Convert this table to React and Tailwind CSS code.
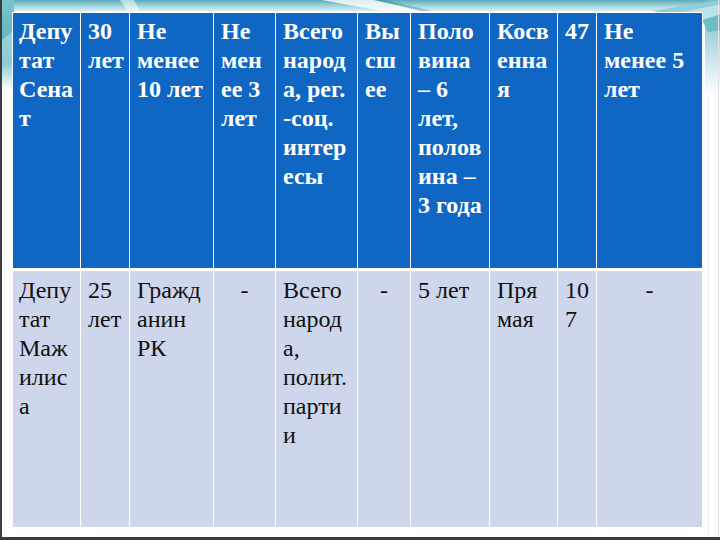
import React from 'react';

const widths = 'grid-cols-[67px_48px_83px_61px_81px_52px_78px_67px_38px_105px]';

// Senate row (blue header)
const senate = [
  ['Депу', 'тат', 'Сена', 'т'],
  ['30', 'лет'],
  ['Не', 'менее', '10 лет'],
  ['Не', 'мен', 'ее 3', 'лет'],
  ['Всего', 'народ', 'а, рег.', '-соц.', 'интер', 'есы'],
  ['Вы', 'сш', 'ее'],
  ['Поло', 'вина', '– 6', 'лет,', 'полов', 'ина –', '3 года'],
  ['Косв', 'енна', 'я'],
  ['47'],
  ['Не', 'менее 5', 'лет'],
];

// Majilis row (light row)
const majilis = [
  { lines: ['Депу', 'тат', 'Маж', 'илис', 'а'] },
  { lines: ['25', 'лет'] },
  { lines: ['Гражд', 'анин', 'РК'] },
  { lines: ['-'], center: true },
  { lines: ['Всего', 'народ', 'а,', 'полит.', 'парти', 'и'] },
  { lines: ['-'], center: true },
  { lines: ['5 лет'] },
  { lines: ['Пря', 'мая'] },
  { lines: ['10', '7'] },
  { lines: ['-'], center: true },
];

function Lines({ lines }) {
  return lines.map((l, i) => (
    <div key={i} className="whitespace-nowrap">{l}</div>
  ));
}

function Decor() {
  return (
    <svg className="absolute inset-0" width="720" height="540" viewBox="0 0 720 540">
      <defs>
        <linearGradient id="topband" x1="0" y1="0" x2="0" y2="1">
          <stop offset="0" stopColor="#5aaab8" />
          <stop offset="0.5" stopColor="#9ed3db" />
          <stop offset="1" stopColor="#d7eef1" />
        </linearGradient>
        <linearGradient id="leftband" x1="0" y1="0" x2="0" y2="1">
          <stop offset="0" stopColor="#7cc4cf" />
          <stop offset="0.7" stopColor="#4fb0bf" />
          <stop offset="1" stopColor="#ffffff" />
        </linearGradient>
        <linearGradient id="rightband" x1="0" y1="0" x2="0" y2="1">
          <stop offset="0" stopColor="#6fbcc7" />
          <stop offset="1" stopColor="#ffffff" />
        </linearGradient>
      </defs>
      <rect x="0" y="0" width="720" height="11" fill="url(#topband)" />
      <polygon points="118,0 132,0 138,11 126,11" fill="#ffffff" opacity="0.55" />
      <polygon points="320,0 372,0 420,11 380,11" fill="#ffffff" opacity="0.8" />
      <polygon points="372,0 384,0 430,11 420,11" fill="#2f7f8c" opacity="0.35" />
      <rect x="0" y="0" width="12" height="90" fill="url(#leftband)" />
      <polygon points="0,40 12,30 12,80 0,95" fill="#ffffff" opacity="0.35" />
      <rect x="703" y="0" width="17" height="95" fill="url(#rightband)" />
      <polygon points="650,11 720,0 720,6 670,14" fill="#8fd0d8" />
      <polygon points="680,12 720,4 720,16 700,20" fill="#b9e3e8" />
      <polygon points="700,20 720,14 720,30 706,32" fill="#6fbcc7" />
      <rect x="706" y="95" width="1" height="440" fill="#e8eef2" />
      <rect x="716" y="0" width="1" height="537" fill="#dde3e6" />
    </svg>
  );
}

export default function App() {
  return (
    <div className="relative w-[720px] h-[540px] overflow-hidden bg-[#fdfdfd] border-l-2 border-b-[3px] border-[#3c3c3c]">
      <Decor />
      <div className={`relative ml-[10px] mt-[12px] w-[691px] bg-white p-px grid ${widths} grid-rows-[255px_256px] gap-x-px gap-y-[3px] text-[24px] leading-[29px] font-['Liberation_Serif',serif]`}>
        {senate.map((lines, i) => (
          <div key={i} className={`bg-[#0f66c3] text-white font-bold pt-[4px] ${i === 0 ? 'pl-[6px]' : 'pl-[7px]'}`}>
            <Lines lines={lines} />
          </div>
        ))}
        {majilis.map((c, i) => (
          <div key={i} className={`bg-[#cdd6ea] text-[#111111] pt-[5px] ${c.center ? 'text-center' : i === 0 ? 'pl-[6px]' : 'pl-[7px]'}`}>
            <Lines lines={c.lines} />
          </div>
        ))}
      </div>
    </div>
  );
}
